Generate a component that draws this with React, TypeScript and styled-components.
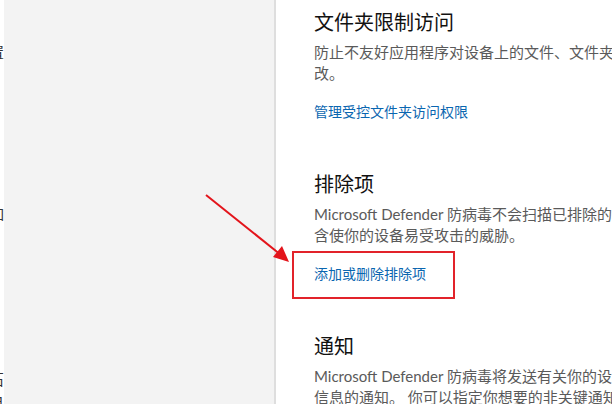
import React from "react";
import styled, { createGlobalStyle } from "styled-components";

const GlobalStyle = createGlobalStyle`
  html, body {
    margin: 0;
    padding: 0;
    background: #ffffff;
    overflow: hidden;
  }
  body {
    font-family: Lato, "Noto Sans CJK SC", sans-serif;
  }
`;

type Section = {
  title: string;
  lines: string[];
  link: string;
  marked?: boolean;
};

const sections: Section[] = [
  {
    title: "文件夹限制访问",
    lines: [
      "防止不友好应用程序对设备上的文件、文件夹和内存区域进行未经授权的更",
      "改。",
    ],
    link: "管理受控文件夹访问权限",
  },
  {
    title: "排除项",
    lines: [
      "Microsoft Defender 防病毒不会扫描已排除的项目。排除的项目可能包",
      "含使你的设备易受攻击的威胁。",
    ],
    link: "添加或删除排除项",
    marked: true,
  },
  {
    title: "通知",
    lines: [
      "Microsoft Defender 防病毒将发送有关你的设备运行状况和安全性的重要",
      "信息的通知。 你可以指定你想要的非关键通知。",
    ],
    link: "管理通知",
  },
];

// right edges of the nav labels that are cut off by the window
const clipped = [
  { top: 42, ch: "置" },
  { top: 142, ch: "如" },
  { top: 145, ch: "石" },
  { top: 4, ch: "目" },
];

export default function App() {
  return (
    <>
      <GlobalStyle />
      <Window>
        <NavClip>
          {clipped.map((c, i) => (
            <ClipGlyph key={i} $top={c.top}>
              {c.ch}
            </ClipGlyph>
          ))}
        </NavClip>
        <Sidebar />
        <Main>
          {sections.map((s) => (
            <Block key={s.title}>
              <Title>{s.title}</Title>
              <Desc>
                {s.lines.map((l, i) => (
                  <Line key={i}>{l}</Line>
                ))}
              </Desc>
              <LinkRow>
                <Link href="#">{s.link}</Link>
                {s.marked && <MarkBox />}
              </LinkRow>
            </Block>
          ))}
        </Main>
        <Arrow width="100" height="80" viewBox="0 0 100 80">
          <line x1="1" y1="1" x2="76" y2="61" stroke="#e3141b" strokeWidth="2" />
          <polygon points="84,68 68,63 77,52" fill="#e3141b" />
        </Arrow>
      </Window>
    </>
  );
}

const Window = styled.div`
  position: relative;
  display: flex;
  width: 612px;
  height: 404px;
  overflow: hidden;
  background: #ffffff;
`;

const NavClip = styled.div`
  width: 4px;
  flex: none;
  background: #ffffff;
  overflow: hidden;
  display: flex;
  flex-direction: column;
  align-items: flex-end;
  font-family: "Noto Sans CJK SC", sans-serif;
  font-size: 15px;
  line-height: 20px;
  color: #333333;
`;

const ClipGlyph = styled.div<{ $top: number }>`
  margin-top: ${(p) => p.$top}px;
  flex: none;
  white-space: nowrap;
`;

const Sidebar = styled.div`
  width: 270px;
  flex: none;
  background: #f3f3f3;
  border-right: 2px solid #dedede;
`;

const Main = styled.main`
  flex: 1;
  min-width: 0;
  padding: 8px 0 0 38px;
  display: flex;
  flex-direction: column;
  gap: 48px;
`;

const Block = styled.section`
  display: flex;
  flex-direction: column;
`;

const Title = styled.h2`
  margin: 0;
  font-size: 20px;
  line-height: 28px;
  font-weight: 400;
  color: #111111;
  white-space: nowrap;
`;

const Desc = styled.p`
  margin: 6px 0 0;
  font-size: 15px;
  line-height: 21px;
  color: #5a5a5a;
`;

const Line = styled.span`
  display: block;
  white-space: nowrap;
`;

const LinkRow = styled.div`
  position: relative;
  margin-top: 17px;
  line-height: 20px;
`;

const Link = styled.a`
  font-size: 14px;
  color: #0a66b0;
  text-decoration: none;
  white-space: nowrap;
`;

const MarkBox = styled.div`
  position: absolute;
  left: -22px;
  top: -12px;
  width: 163px;
  height: 48px;
  box-sizing: border-box;
  border: 2px solid #e2232a;
`;

const Arrow = styled.svg`
  position: absolute;
  left: 205px;
  top: 194px;
  overflow: visible;
`;
